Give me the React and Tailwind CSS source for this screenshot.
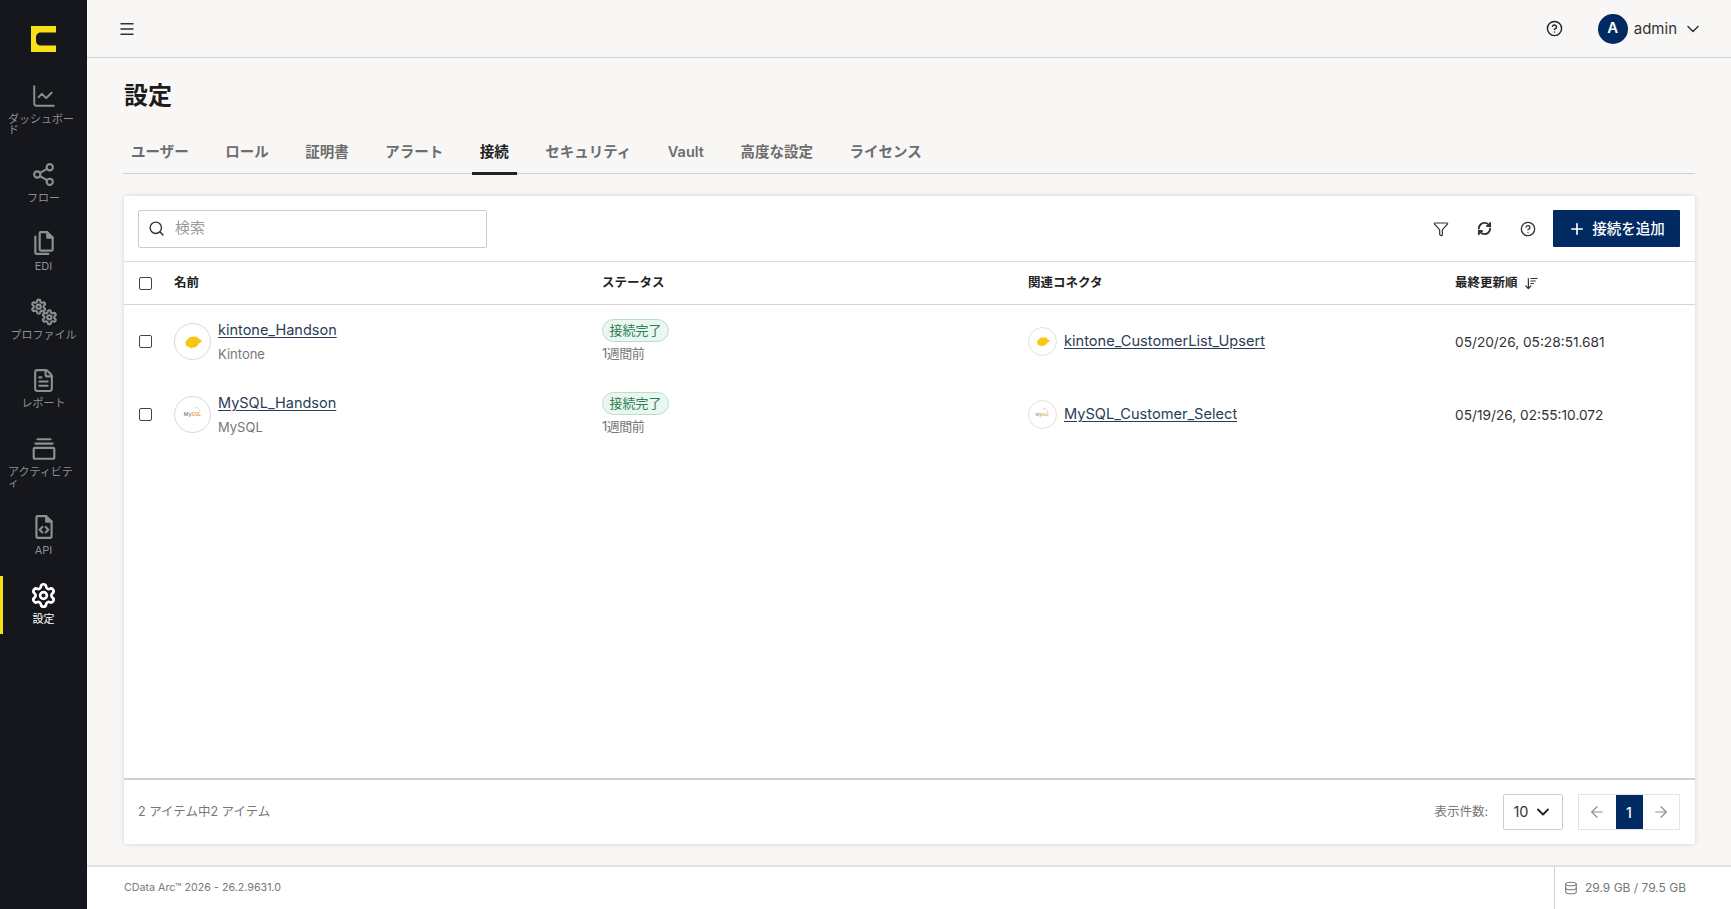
import React from "react";
import { Menu, CircleHelp, ChevronDown, Search, Funnel, Plus, ArrowLeft, ArrowRight, Database, ArrowDownWideNarrow, ChartLine, Share2, FileText, Settings, RefreshCw } from "lucide-react";

const gearPath = "M12.22 2h-.44a2 2 0 0 0-2 2v.18a2 2 0 0 1-1 1.73l-.43.25a2 2 0 0 1-2 0l-.15-.08a2 2 0 0 0-2.73.73l-.22.38a2 2 0 0 0 .73 2.73l.15.1a2 2 0 0 1 1 1.72v.51a2 2 0 0 1-1 1.74l-.15.09a2 2 0 0 0-.73 2.73l.22.38a2 2 0 0 0 2.73.73l.15-.08a2 2 0 0 1 2 0l.43.25a2 2 0 0 1 1 1.73V20a2 2 0 0 0 2 2h.44a2 2 0 0 0 2-2v-.18a2 2 0 0 1 1-1.73l.43-.25a2 2 0 0 1 2 0l.15.08a2 2 0 0 0 2.73-.73l.22-.39a2 2 0 0 0-.73-2.73l-.15-.08a2 2 0 0 1-1-1.74v-.5a2 2 0 0 1 1-1.74l.15-.09a2 2 0 0 0 .73-2.73l-.22-.38a2 2 0 0 0-2.73-.73l-.15.08a2 2 0 0 1-2 0l-.43-.25a2 2 0 0 1-1-1.73V4a2 2 0 0 0-2-2z";

const Svg = ({ children, size = 26 }) => (
  <svg width={size} height={size} viewBox="0 0 24 24" fill="none" stroke="currentColor" strokeWidth="2" strokeLinecap="round" strokeLinejoin="round">{children}</svg>
);

const FilesIcon = () => (
  <Svg>
    <path d="M9 2h6l5 5v11a1 1 0 0 1-1 1H9a1 1 0 0 1-1-1V3a1 1 0 0 1 1-1z" />
    <path d="M15 2v5h5" fill="currentColor" />
    <path d="M4 6v15a1 1 0 0 0 1 1h11" />
  </Svg>
);
const CogsIcon = () => (
  <Svg size={30}>
    <svg x="1" y="1" width="13.500" height="13.500" viewBox="0 0 24 24"><path d={gearPath} strokeWidth="3" /><circle cx="12" cy="12" r="3" strokeWidth="3" /></svg>
    <svg x="9.500" y="9.500" width="13.500" height="13.500" viewBox="0 0 24 24"><path d={gearPath} strokeWidth="3" /><circle cx="12" cy="12" r="3" strokeWidth="3" /></svg>
  </Svg>
);
const ActivityIcon = () => (
  <Svg>
    <path d="M6 3h12" />
    <path d="M4 7h16" />
    <rect x="2.5" y="11" width="19" height="10" rx="1" />
  </Svg>
);
const ApiIcon = () => (
  <Svg>
    <path d="M14 2H6a1 1 0 0 0-1 1v18a1 1 0 0 0 1 1h12a1 1 0 0 0 1-1V7z" />
    <path d="M14 2v5h5" fill="currentColor" />
    <path d="m10.5 12-2.500 2.500 2.500 2.500" />
    <path d="m13.500 12 2.500 2.500-2.500 2.500" />
  </Svg>
);

const navItems = [
  { label: "ダッシュボード", icon: <ChartLine size={26} strokeWidth={1.8} />, h: "h-[68px]" },
  { label: "フロー", icon: <Share2 size={25} strokeWidth={2} />, h: "h-[58px]" },
  { label: "EDI", icon: <FilesIcon />, h: "h-[58px]" },
  { label: "プロファイル", icon: <CogsIcon />, h: "h-[58px]" },
  { label: "レポート", icon: <FileText size={25} strokeWidth={2} />, h: "h-[58px]" },
  { label: "アクティビティ", icon: <ActivityIcon />, h: "h-[68px]" },
  { label: "API", icon: <ApiIcon />, h: "h-[58px]" },
  { label: "設定", icon: <Settings size={27} strokeWidth={2.4} />, h: "h-[58px]", active: true },
];

const tabs = ["ユーザー", "ロール", "証明書", "アラート", "接続", "セキュリティ", "Vault", "高度な設定", "ライセンス"];

const KintoneLogo = ({ size }) => (
  <svg width={size} height={size} viewBox="0 0 24 24">
    <path d="M7 12 10 8.600l4.500-.4 2.700 2 1.600 1.200-2.400 1.600-1.600 2.200-3.600 1-3.400-1.400z" fill="#f6c814" />
  </svg>
);

const ConnLogo = ({ type, big }) => (
  <div className={big
    ? "flex h-[37px] w-[37px] shrink-0 items-center justify-center rounded-full border border-[#d9d9d9] bg-white"
    : "flex h-[29px] w-[29px] shrink-0 items-center justify-center rounded-full border border-[#e2dfd8] bg-white"}>
    {type === "kintone" ? (
      <KintoneLogo size={big ? 36 : 27} />
    ) : (
      <div className={big ? "relative text-[5px] font-medium leading-none" : "relative text-[4px] leading-none"}>
        <svg className="absolute right-0 top-[-6px]" width="6" height="7" viewBox="0 0 6 7" fill="none" stroke="#b9b9b9" strokeWidth="0.5"><path d="M1 1c2 0 3 2 4 5" /><path d="M1 1 0 3" /></svg>
        <span className="text-[#667a86]">My</span><span className="text-[#e48e1a]">SQL</span>
      </div>
    )}
  </div>
);

const rows = [
  { name: "kintone_Handson", sub: "Kintone", type: "kintone", conn: "kintone_CustomerList_Upsert", date: "05/20/26, 05:28:51.681" },
  { name: "MySQL_Handson", sub: "MySQL", type: "mysql", conn: "MySQL_Customer_Select", date: "05/19/26, 02:55:10.072" },
];

const Check = () => <div className="h-[13px] w-[13px] rounded-[2px] border-[1.5px] border-[#444] bg-white" />;
const gridCols = "grid grid-cols-[50px_428px_426px_427px_1fr]";
const sans = "font-['Inter','Noto_Sans_CJK_JP',sans-serif]";

export default function App() {
  return (
    <div className={`flex h-screen w-full overflow-hidden bg-[#f8f7f6] text-[#222] ${sans}`}>
      <aside className="flex w-[87px] shrink-0 flex-col bg-[#15171c]">
        <div className="flex h-[76px] items-start justify-center pt-[26px]">
          <svg width="25" height="26" viewBox="0 0 25 26">
            <path d="M0 0h25v6.500H10c-3 0-5 2-5 5v3c0 3 2 5 5 5h15V26H0z" fill="#f7e017" />
          </svg>
        </div>
        <nav className="flex flex-col gap-[10.5px]">
          {navItems.map((n) => (
            <a key={n.label} className={`relative flex ${n.h} flex-col items-center px-[8px] pt-[7px] ${n.active ? "text-white" : "text-[#8d8f93]"}`}>
              {n.active && <span className="absolute bottom-0 left-0 top-0 w-[3px] bg-[#f7e017]" />}
              <span className="flex h-[26px] items-center justify-center">{n.icon}</span>
              <span className="mt-[5px] max-w-full text-left text-[11px] leading-[11px]">{n.label}</span>
            </a>
          ))}
        </nav>
      </aside>

      <div className="flex min-w-0 flex-1 flex-col">
        <header className="flex h-[58px] shrink-0 items-center justify-between border-b border-[#cfcfcf] pl-[31px] pr-[28px]">
          <Menu size={18} strokeWidth={2} className="text-[#333]" />
          <div className="flex items-center">
            <CircleHelp size={17} strokeWidth={2} className="mr-[35px] text-[#222]" />
            <span className="flex h-[30px] w-[30px] items-center justify-center rounded-full bg-[#012a62] text-[15px] font-semibold text-white">A</span>
            <span className="ml-[6px] pt-[2px] text-[15px] text-[#333]">admin</span>
            <ChevronDown size={20} strokeWidth={1.8} className="ml-[6px] text-[#333]" />
          </div>
        </header>

        <main className="flex min-h-0 flex-1 flex-col pl-[37px] pr-[36px]">
          <h1 className="mt-[22px] text-[24px] font-bold leading-[32px] text-[#1c1c1c]">設定</h1>
          <div className="-ml-px mt-[20px] flex h-[42px] gap-[20.5px] border-b border-[#cfcfcf]">
            {tabs.map((t) => (
              <button key={t} className={`-mb-px h-[43px] border-b-[3px] px-[8px] pb-0 text-[14.5px] font-semibold ${t === "接続" ? "border-[#222] text-[#222]" : "border-transparent text-[#6d6d6d]"}`}>{t}</button>
            ))}
          </div>

          <section className="mt-[22px] flex min-h-0 flex-1 flex-col rounded-[2px] bg-white shadow-[0_0_5px_rgba(0,0,0,0.14)]">
            <div className="flex h-[66px] shrink-0 items-center justify-between border-b border-[#dcdcdc] pl-[14px] pr-[15px]">
              <div className="flex h-[38px] w-[349px] items-center rounded-[2px] border border-[#cccccc] bg-white px-[9px]">
                <Search size={17} strokeWidth={2} className="text-[#333]" />
                <span className="ml-[10px] text-[15px] text-[#9a9a9a]">検索</span>
              </div>
              <div className="flex items-center">
                <Funnel size={16} strokeWidth={1.8} className="text-[#333]" />
                <RefreshCw size={15} strokeWidth={3} className="ml-[28px] text-[#333]" />
                <CircleHelp size={16} strokeWidth={2} className="ml-[28px] text-[#333]" />
                <button className="ml-[17px] flex h-[37px] w-[127px] items-center justify-center rounded-[1px] bg-[#012a62] text-[14.5px] font-medium text-white">
                  <Plus size={18} strokeWidth={2.2} />
                  <span className="ml-[6px]">接続を追加</span>
                </button>
              </div>
            </div>

            <div className={`${gridCols} h-[43px] shrink-0 items-center border-b border-[#d4d4d4] text-[12.5px] font-semibold text-[#222]`}>
              <div className="pl-[15px]"><Check /></div>
              <div>名前</div>
              <div>ステータス</div>
              <div>関連コネクタ</div>
              <div className="flex items-center">最終更新順<ArrowDownWideNarrow size={15} strokeWidth={1.9} className="ml-[6px] text-[#333]" /></div>
            </div>

            <div className="min-h-0 flex-1">
              {rows.map((r) => (
                <div key={r.name} className={`${gridCols} h-[73px] items-center`}>
                  <div className="pl-[15px]"><Check /></div>
                  <div className="flex items-center gap-[7px]">
                    <ConnLogo type={r.type} big />
                    <div className="flex flex-col pb-[2px]">
                      <a className="text-[14.5px] leading-[22px] text-[#2a3d55] underline underline-offset-2">{r.name}</a>
                      <span className="mt-[4px] text-[13px] leading-[18px] text-[#777]">{r.sub}</span>
                    </div>
                  </div>
                  <div className="flex flex-col items-start pb-[2px]">
                    <span className="flex h-[23px] items-center rounded-full border border-[#b9dfcb] bg-[#e9f7f0] px-[6.5px] text-[13px] text-[#2e7d55]">接続完了</span>
                    <span className="mt-[2px] text-[13px] leading-[18px] tracking-[-0.5px] text-[#777]">1週間前</span>
                  </div>
                  <div className="flex items-center gap-[7px]">
                    <ConnLogo type={r.type} />
                    <a className="pt-[1px] text-[14.6px] text-[#2a3d55] underline underline-offset-2">{r.conn}</a>
                  </div>
                  <div className="pt-[1px] text-[13.7px] text-[#333]">{r.date}</div>
                </div>
              ))}
            </div>

            <div className="flex h-[66px] shrink-0 items-center justify-between border-t-2 border-[#d0d0d0] pl-[14px] pr-[15px]">
              <span className="text-[12.5px] text-[#777]">2 アイテム中2 アイテム</span>
              <div className="flex items-center">
                <span className="text-[12.5px] text-[#777]">表示件数:</span>
                <div className="ml-[15px] flex h-[36px] w-[60px] items-center justify-center gap-[4px] rounded-[2px] border border-[#cccccc] text-[14.5px] text-[#333]">
                  10<ChevronDown size={20} strokeWidth={2.2} className="text-[#222]" />
                </div>
                <div className="ml-[15px] flex h-[36px] w-[102px] items-stretch border border-[#e4e4e4]">
                  <span className="flex flex-1 items-center justify-center text-[#8e8e8e]"><ArrowLeft size={18} strokeWidth={1.6} /></span>
                  <span className="flex w-[27px] items-center justify-center bg-[#012a62] text-[14px] font-medium text-white">1</span>
                  <span className="flex flex-1 items-center justify-center text-[#8e8e8e]"><ArrowRight size={18} strokeWidth={1.6} /></span>
                </div>
              </div>
            </div>
          </section>
          <div className="h-[21px] shrink-0" />
        </main>

        <footer className="flex h-[44px] shrink-0 items-stretch justify-between border-t-2 border-[#e2e2e2] bg-white pl-[37px]">
          <span className="flex items-center text-[10.7px] text-[#777]">CData Arc™ 2026 - 26.2.9631.0</span>
          <div className="flex w-[177px] items-center border-l border-[#cfcfcf] pl-[9px]">
            <Database size={14} strokeWidth={1.8} className="text-[#777]" />
            <span className="ml-[7px] text-[12px] text-[#777]">29.9 GB / 79.5 GB</span>
          </div>
        </footer>
      </div>
    </div>
  );
}
